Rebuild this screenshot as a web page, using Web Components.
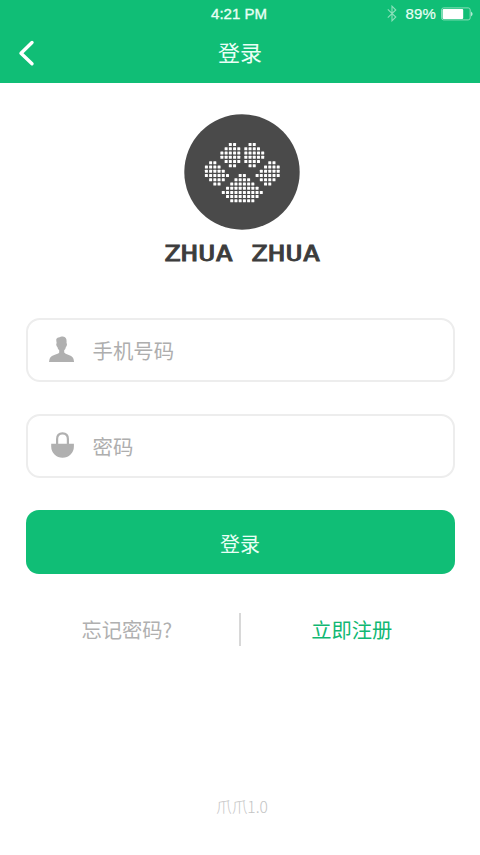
<!DOCTYPE html>
<html lang="zh-CN">
<head>
<meta charset="utf-8">
<title>登录</title>
<style>
html,body{margin:0;height:100%;background:#fff}
body{font-family:"Noto Sans CJK SC","Liberation Sans",sans-serif}
</style>
</head>
<body>
<login-page></login-page>
<script>
function define(name, html, setup) {
  const t = document.createElement('template');
  t.innerHTML = html;
  customElements.define(name, class extends HTMLElement {
    constructor() {
      super();
      this.attachShadow({mode: 'open'}).append(t.content.cloneNode(true));
    }
    connectedCallback() { if (setup) setup(this.shadowRoot, this); }
  });
}

define('status-bar', `
<style>
:host{display:grid;grid-template-columns:1fr auto 1fr;align-items:center;height:27px;color:#e9fff5;font:15px/18px "Liberation Sans",sans-serif;padding:0 7px 0 5px;box-sizing:border-box}
.time{grid-column:2;-webkit-text-stroke:.35px currentColor}
.right{display:flex;justify-content:flex-end;align-items:center;grid-column:3}
.pct{margin-left:8px;letter-spacing:.2px;-webkit-text-stroke:.2px currentColor}
.bat{margin-left:5px}
svg{display:block}
</style>
<span class="time">4:21 PM</span>
<div class="right">
<svg width="10" height="17" viewBox="0 0 10 17" fill="none" stroke="#8ce0bb" stroke-width="1.1"><path d="M.8 4.3 8.8 12 5 15.8V1.2L8.8 5 .8 12.7"/></svg>
<span class="pct">89%</span>
<svg class="bat" width="32" height="14" viewBox="0 0 32 14"><rect x=".6" y=".9" width="28.6" height="12" rx="2" fill="none" stroke="#8ce0bb"/><rect x="1.6" y="1.9" width="20.6" height="10" rx="1" fill="#fff"/><path d="M30.2 4.6q2.6 2.4 0 4.8z" fill="#d8f8ea"/></svg>
</div>`);

define('nav-bar', `
<style>
:host{display:grid;grid-template-columns:60px 1fr 60px;height:56px;align-items:center;color:#eafff6}
svg{display:block;margin:-5px 0 0 18px}
h1{margin:0;text-align:center;font-weight:400;font-size:22px;line-height:30px;padding:0 0 8px}
</style>
<svg width="18" height="28" viewBox="0 0 18 28" fill="none" stroke="#fff" stroke-width="3.4" stroke-linecap="round" stroke-linejoin="round"><path d="M14 3.5 3 14.3 14 24.8"/></svg>
<h1><slot></slot></h1>`);

define('paw-logo', `
<style>
:host{display:flex;flex-direction:column;align-items:center}
svg{display:block;margin-left:4px}
.word{white-space:pre;font:20.5px/24px "DejaVu Sans Mono",monospace;letter-spacing:.3px;color:#3c3c3c;-webkit-text-stroke:.8px currentColor;transform:scaleX(1.38);margin-top:11.5px;margin-left:4px}
</style>
<svg width="116" height="116" viewBox="184 114 116 116"><circle cx="242" cy="172" r="57.7" fill="#4a4a4a"/><g fill="#fff"></g></svg>
<div class="word"><slot></slot></div>`, root => {
  const g = root.querySelector('g'), p = 4.22;
  // Each pad lists its rows as [first column, last column].
  const pads = [
    [206.4, 162.8, [[1,2],[0,3],[0,4],[0,5],[1,4],[2,3]], true],
    [221.9, 144.6, [[2,3],[1,4],[0,4],[0,4],[1,4],[2,3]], true],
    [223.3, 175.5, [[4,5],[3,6],[2,7],[1,8],[0,9],[1,8],[2,7]], false]
  ];
  const dot = (x, y) => {
    const r = document.createElementNS('http://www.w3.org/2000/svg', 'rect');
    for (const [k, v] of Object.entries({x: x - 1.5, y: y - 1.5, width: 3, height: 3, rx: .5})) r.setAttribute(k, v);
    g.append(r);
  };
  for (const [x0, y0, rows, mirror] of pads)
    rows.forEach(([a, b], i) => {
      for (let c = a; c <= b; c++) {
        dot(x0 + c * p, y0 + i * p);
        if (mirror) dot(484.6 - x0 - c * p, y0 + i * p);
      }
    });
});

define('text-field', `
<style>
:host{display:flex;align-items:center;height:64px;box-sizing:border-box;border:2px solid #ededed;border-radius:14px;padding-left:20px;color:#aeaeae;font-size:20.4px;line-height:28px}
.icon{width:30px;height:30px;margin:-1px 15px 0 0}
</style>
<div class="icon"><slot name="icon"></slot></div>
<span><slot></slot></span>`);

define('user-icon', `<style>:host,svg{display:block}</style>
<svg width="30" height="30" viewBox="0 0 30 30" fill="#b0b0b0"><path d="M8.3 5.1q1-2 3.3-1.9 1.2-1 3.3-.6 3.9.5 3.7 4.9l-.1 1.8q.8.1.4 1.8-.3 1.5-1 1.8-.4 2.2-1.7 3.4v2.3q.7 1.4 4.6 2.3 5.3 1.3 5.3 7.1H1q0-5.8 5.2-7.1 4.3-.9 5-2.3v-2.3q-1.4-1.2-1.8-3.4-.8-.3-1.1-1.8-.3-1.7.4-1.8-.6-2.7-.4-4.2z"/></svg>`);

define('lock-icon', `<style>:host,svg{display:block}</style>
<svg width="30" height="30" viewBox="0 0 30 30"><path d="M9.1 14V9q0-5.6 5.4-5.6T19.9 9v5" fill="none" stroke="#b0b0b0" stroke-width="2.2"/><path d="M3.2 13.8h22.7v2.8a11.35 11.2 0 0 1-22.7 0z" fill="#b0b0b0"/></svg>`);

define('primary-button', `
<style>
:host{display:block}
button{display:block;width:100%;height:64px;border:0;border-radius:13px;background:#10be76;color:#e8fff5;font:400 20px/28px "Noto Sans CJK SC",sans-serif;padding:5px 0 0}
</style>
<button><slot></slot></button>`);

define('link-row', `
<style>
:host{display:grid;grid-template-columns:1fr 2px 1fr;align-items:center;height:33px;font-size:20.3px;line-height:30px;text-align:center}
i{display:block;height:33px;background:#d8d8d8}
span{padding-bottom:1px}
.a{color:#b0b0b0;padding-right:11px}
.b{color:#10b873;padding-left:8px}
</style>
<span class="a"><slot name="left"></slot></span><i></i><span class="b"><slot name="right"></slot></span>`);

define('login-page', `
<style>
:host{display:flex;flex-direction:column;height:855px;width:480px;background:#fff;overflow:hidden}
header{background:#10be76;height:83px;flex:none}
main{display:flex;flex-direction:column;flex:1;padding:0 25.5px}
paw-logo{margin-top:31px;height:203.5px}
text-field{margin-bottom:32px}
link-row{margin-top:39px}
footer{margin-top:auto;text-align:center;color:#c4c4c4;font-size:15.6px;line-height:24px;font-weight:300;padding:0 0 37px 4px}
</style>
<header><status-bar></status-bar><nav-bar>登录</nav-bar></header>
<main>
<paw-logo>ZHUA ZHUA</paw-logo>
<text-field><user-icon slot="icon"></user-icon>手机号码</text-field>
<text-field><lock-icon slot="icon"></lock-icon>密码</text-field>
<primary-button>登录</primary-button>
<link-row><span slot="left">忘记密码?</span><span slot="right">立即注册</span></link-row>
<footer>爪爪1.0</footer>
</main>`);
</script>
</body>
</html>
